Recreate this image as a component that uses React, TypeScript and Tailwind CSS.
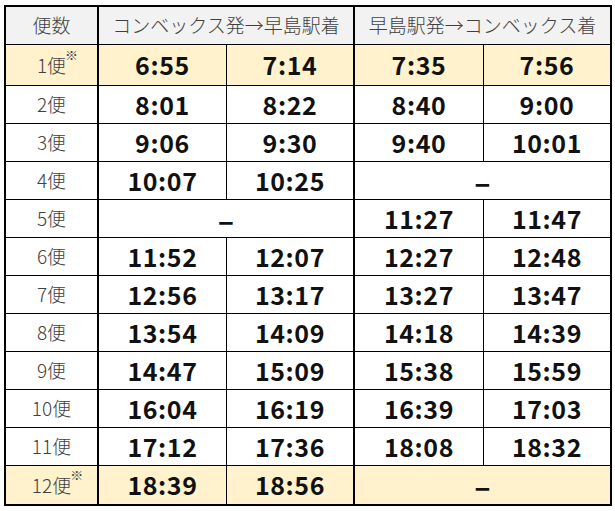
import React from "react";

type Row = { label: string; mark?: boolean; hl?: boolean; a?: [string, string] | null; b?: [string, string] | null };

const rows: Row[] = [
  { label: "1便", mark: true, hl: true, a: ["6:55", "7:14"], b: ["7:35", "7:56"] },
  { label: "2便", a: ["8:01", "8:22"], b: ["8:40", "9:00"] },
  { label: "3便", a: ["9:06", "9:30"], b: ["9:40", "10:01"] },
  { label: "4便", a: ["10:07", "10:25"], b: null },
  { label: "5便", a: null, b: ["11:27", "11:47"] },
  { label: "6便", a: ["11:52", "12:07"], b: ["12:27", "12:48"] },
  { label: "7便", a: ["12:56", "13:17"], b: ["13:27", "13:47"] },
  { label: "8便", a: ["13:54", "14:09"], b: ["14:18", "14:39"] },
  { label: "9便", a: ["14:47", "15:09"], b: ["15:38", "15:59"] },
  { label: "10便", a: ["16:04", "16:19"], b: ["16:39", "17:03"] },
  { label: "11便", a: ["17:12", "17:36"], b: ["18:08", "18:32"] },
  { label: "12便", mark: true, hl: true, a: ["18:39", "18:56"], b: null },
];

const font = { fontFamily: '"Noto Sans CJK JP", "Noto Sans", sans-serif' };

function Pair({ v, w1 }: { v: [string, string] | null | undefined; w1: string }) {
  if (!v) {
    return (
      <div className="flex items-center justify-center flex-1 text-[30px] font-bold text-[#111] leading-none">
        –
      </div>
    );
  }
  return (
    <div className="flex flex-1">
      <div className={`${w1} flex items-center justify-center border-r border-black text-[25px] font-semibold text-[#111] tracking-[0.6px]`}>{v[0]}</div>
      <div className="flex-1 flex items-center justify-center text-[25px] font-semibold text-[#111] tracking-[0.6px]">{v[1]}</div>
    </div>
  );
}

export default function App() {
  return (
    <div className="w-[615px] h-[511px] bg-white pt-[5px] pl-[4px]" style={font}>
      <div className="w-[608px] border-2 border-black flex flex-col">
        <div className="flex h-[38px] bg-[#f2f2f2] border-b border-black text-[19px] text-[#404040] font-light">
          <div className="w-[93px] border-r-2 border-black flex items-center justify-center">便数</div>
          <div className="w-[256px] border-r-2 border-black flex items-center justify-center">コンベックス発→早島駅着</div>
          <div className="flex-1 flex items-center justify-center">早島駅発→コンベックス着</div>
        </div>
        {rows.map((r, i) => {
          const h = i === 0 ? "h-[41px]" : "h-[38px]";
          const bb = i === rows.length - 1 ? "" : "border-b border-black";
          return (
            <div key={r.label} className={`flex ${h} ${bb} ${r.hl ? "bg-[#fff2cc]" : "bg-white"}`}>
              <div className="w-[93px] border-r-2 border-black flex items-center justify-center text-[19px] text-[#404040] font-light">
                <span className="relative">
                  {r.label}
                  {r.mark && <span className="absolute -right-[12px] -top-[3px] text-[13px] leading-none">※</span>}
                </span>
              </div>
              <div className="w-[256px] border-r-2 border-black flex">
                <Pair v={r.a} w1="w-[128px]" />
              </div>
              <div className="flex-1 flex">
                <Pair v={r.b} w1="w-[129px]" />
              </div>
            </div>
          );
        })}
      </div>
    </div>
  );
}
